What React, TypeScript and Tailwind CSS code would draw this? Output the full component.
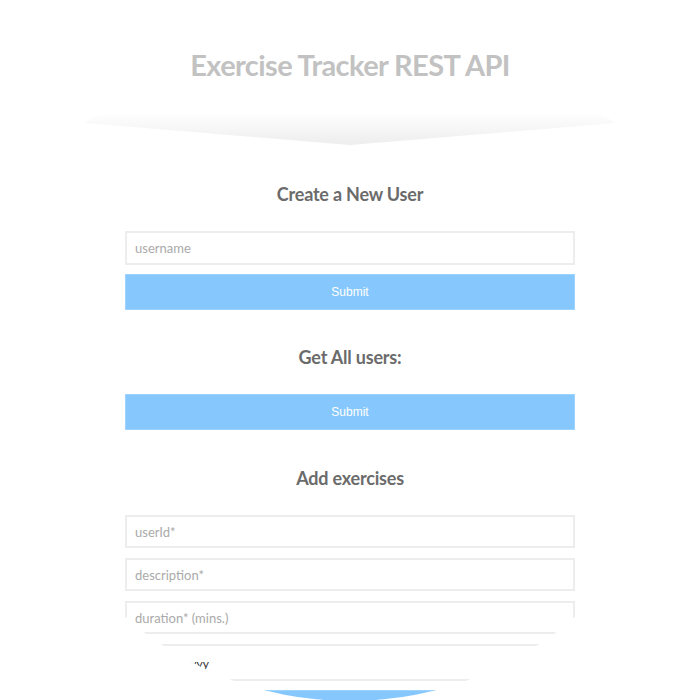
import React from "react";

export default function App() {
  const inputCls =
    "block w-full h-[33px] border-2 border-[#ededed] bg-white px-[8px] text-[13px] text-[#555] placeholder:text-[#aaa] outline-none";
  const btnCls =
    "block w-full h-[36px] bg-[#86c8fd] border border-[#9ed3fd] text-white text-[12px] [font-family:'Liberation_Sans',Arial,sans-serif]";

  return (
    <div className="w-[700px] h-[700px] overflow-hidden bg-white [font-family:Lato,'Open_Sans',sans-serif]">
      {/* header */}
      <div className="pt-[47px] flex flex-col items-center">
        <h1 className="text-[29px] leading-[36px] font-bold text-[#c2c2c2] tracking-[-0.6px]">
          Exercise Tracker REST API
        </h1>
        <svg width="530" height="36" viewBox="0 0 530 36" className="mt-[29px]">
          <defs>
            <linearGradient id="band" x1="0" y1="0" x2="0" y2="1">
              <stop offset="0" stopColor="#ffffff" />
              <stop offset="1" stopColor="#ededed" />
            </linearGradient>
          </defs>
          <polygon points="0,11 14,1 516,1 530,11 265,33" fill="url(#band)" />
        </svg>
      </div>

      {/* forms, cut round at the bottom */}
      <div className="pt-[34px] [clip-path:circle(343px_at_350px_210px)]">
        <div className="w-[450px] mx-auto">
          <form onSubmit={(e) => e.preventDefault()}>
            <h3 className="text-center text-[18px] leading-[24px] font-bold text-[#6b6b6b] tracking-[-0.2px]">
              Create a New User
            </h3>
            <div className="mt-[25px] flex flex-col gap-[9px]">
              <input type="text" placeholder="username" className={inputCls + " h-[34px]"} />
              <button type="submit" className={btnCls}>
                Submit
              </button>
            </div>
          </form>

          <form onSubmit={(e) => e.preventDefault()}>
            <h3 className="mt-[35px] text-center text-[18px] leading-[24px] font-bold text-[#6b6b6b] tracking-[-0.2px]">
              Get All users:
            </h3>
            <div className="mt-[25px]">
              <button type="submit" className={btnCls}>
                Submit
              </button>
            </div>
          </form>

          <form onSubmit={(e) => e.preventDefault()}>
            <h3 className="mt-[36px] text-center text-[18px] leading-[24px] font-bold text-[#6b6b6b] tracking-[-0.2px]">
              Add exercises
            </h3>
            <div className="mt-[25px] flex flex-col gap-[10px]">
              <input type="text" placeholder="userId*" className={inputCls} />
              <input type="text" placeholder="description*" className={inputCls} />
              <input type="text" placeholder="duration* (mins.)" className={inputCls} />
              <input
                type="date"
                className="block w-full h-[37px] border-2 border-[#ededed] bg-white px-[8px] pt-[2px] text-[12px] text-[#333] outline-none"
              />
              <button type="submit" className={btnCls + " mt-[-1px]"}>
                Submit
              </button>
            </div>
          </form>
        </div>
      </div>
    </div>
  );
}
